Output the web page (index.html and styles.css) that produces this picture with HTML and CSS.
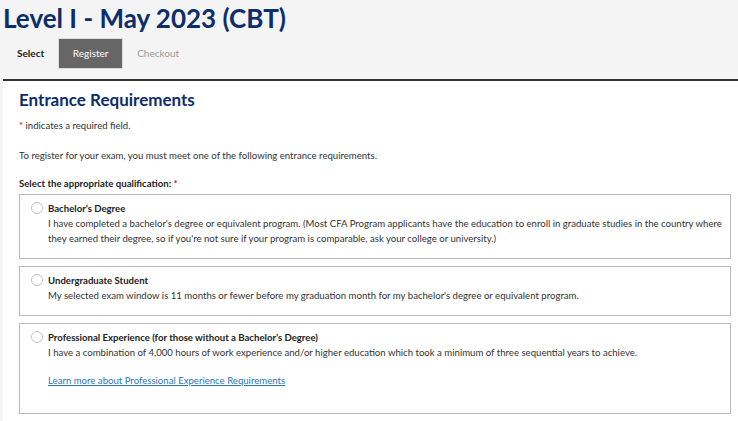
FILE: index.html
```html
<!DOCTYPE html>
<html lang="en">
<head>
<meta charset="utf-8">
<title>Level I - May 2023 (CBT)</title>
<link rel="stylesheet" href="styles.css">
</head>
<body>
<header class="page-header">
  <h1 class="page-title">Level I - May 2023 (CBT)</h1>
  <nav class="steps">
    <span class="step step-done">Select</span>
    <span class="step step-active">Register</span>
    <span class="step step-next">Checkout</span>
  </nav>
</header>
<main class="panel">
  <h2 class="section-title">Entrance Requirements</h2>
  <p class="note"><span class="req">*</span> indicates a required field.</p>
  <p class="intro">To register for your exam, you must meet one of the following entrance requirements.</p>
  <p class="field-label">Select the appropriate qualification: <span class="req">*</span></p>
  <div class="options">
    <label class="option">
      <span class="radio"></span>
      <span class="option-body">
        <span class="option-title">Bachelor’s Degree</span>
        <span class="option-text">I have completed a bachelor's degree or equivalent program. (Most CFA Program applicants have the education to enroll in graduate studies in the country where they earned their degree, so if you're not sure if your program is comparable, ask your college or university.)</span>
      </span>
    </label>
    <label class="option">
      <span class="radio"></span>
      <span class="option-body">
        <span class="option-title">Undergraduate Student</span>
        <span class="option-text">My selected exam window is 11 months or fewer before my graduation month for my bachelor's degree or equivalent program.</span>
      </span>
    </label>
    <label class="option option-tall">
      <span class="radio"></span>
      <span class="option-body">
        <span class="option-title">Professional Experience (for those without a Bachelor’s Degree)</span>
        <span class="option-text">I have a combination of 4,000 hours of work experience and/or higher education which took a minimum of three sequential years to achieve.</span>
        <a class="option-link" href="#">Learn more about Professional Experience Requirements</a>
      </span>
    </label>
  </div>
</main>
</body>
</html>
```
FILE: styles.css
```css
* { box-sizing: border-box; }

html, body {
  margin: 0;
  padding: 0;
}

body {
  background: #f4f4f4;
  font-family: Lato, "Open Sans", Arial, sans-serif;
  color: #333;
  font-size: 9.6px;
  line-height: 15px;
}

.page-header {
  padding: 0 0 0 3px;
}

.page-title {
  margin: 0;
  font-size: 26px;
  line-height: 36px;
  font-weight: 700;
  color: #0d2d6c;
}

.steps {
  display: flex;
  align-items: center;
  padding: 3px 0 11px 14px;
}

.step {
  font-size: 10px;
  height: 29px;
  line-height: 29px;
  padding: 0 15px;
}

.step-done {
  font-weight: 700;
  color: #222;
  padding-left: 0;
}

.step-active {
  background: #666;
  color: #fff;
  width: 63px;
  text-align: center;
  padding: 0;
  box-shadow: 0 0 0 1px #ddd;
}

.step-next {
  color: #999;
}

.panel {
  margin-left: 3px;
  background: #fff;
  border-top: 2px solid #333;
  padding: 8px 7px 8px 16px;
  min-height: 342px;
}

.section-title {
  margin: 0 0 7px;
  font-size: 17px;
  line-height: 22px;
  font-weight: 700;
  color: #0d2d6c;
}

.note, .intro, .field-label {
  margin: 0;
}

.note { margin-bottom: 15px; }
.intro { margin-bottom: 13px; }
.field-label {
  font-weight: 700;
  color: #222;
  margin-bottom: 3px;
}

.req { color: #c8102e; }

.options {
  display: flex;
  flex-direction: column;
  gap: 7px;
}

.option {
  display: flex;
  align-items: flex-start;
  gap: 5px;
  border: 1px solid #bbb;
  padding: 6px 5px 12px 11px;
}

.option-tall {
  padding-bottom: 25px;
}

.radio {
  flex: none;
  width: 12px;
  height: 12px;
  margin-top: 1px;
  border: 1px solid #c4c4c4;
  border-radius: 50%;
  background: #fff;
}

.option-body {
  display: flex;
  flex-direction: column;
  align-items: flex-start;
}

.option-title {
  font-weight: 700;
  color: #222;
}

.option-link {
  margin-top: 13px;
  color: #2a78b5;
  text-decoration: underline;
}
```
